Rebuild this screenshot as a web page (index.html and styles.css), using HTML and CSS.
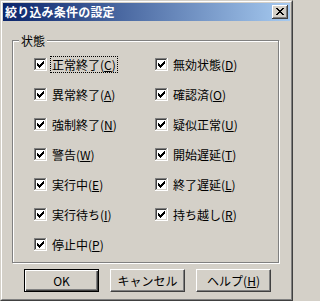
FILE: index.html
```html
<!DOCTYPE html>
<html lang="ja">
<head>
<meta charset="utf-8">
<title>絞り込み条件の設定</title>
<link rel="stylesheet" href="styles.css">
</head>
<body>
<svg class="defs" width="0" height="0" aria-hidden="true">
  <symbol id="cb" viewBox="0 0 13 13">
    <rect x="0" y="0" width="13" height="13" fill="#fff"/>
    <rect x="0" y="0" width="12" height="1" fill="#808080"/>
    <rect x="0" y="0" width="1" height="12" fill="#808080"/>
    <rect x="1" y="1" width="10" height="1" fill="#404040"/>
    <rect x="1" y="1" width="1" height="10" fill="#404040"/>
    <rect x="1" y="11" width="11" height="1" fill="#d4d0c8"/>
    <rect x="11" y="1" width="1" height="11" fill="#d4d0c8"/>
    <path fill="#000" d="M9 3h1v1h-1z M8 4h2v1h-2z M3 5h1v1h-1z M7 5h3v1h-3z M3 6h2v1h-2z M6 6h3v1h-3z M3 7h5v1h-5z M4 8h3v1h-3z M5 9h1v1h-1z"/>
  </symbol>
</svg>
<div class="window">
  <div class="frame">
    <div class="titlebar">
      <span class="title">絞り込み条件の設定</span>
      <svg class="close" width="16" height="14" viewBox="0 0 16 14" shape-rendering="crispEdges">
        <rect x="0" y="0" width="16" height="14" fill="#d4d0c8"/>
        <rect x="0" y="0" width="15" height="1" fill="#fff"/>
        <rect x="0" y="0" width="1" height="13" fill="#fff"/>
        <rect x="0" y="13" width="16" height="1" fill="#404040"/>
        <rect x="15" y="0" width="1" height="14" fill="#404040"/>
        <rect x="1" y="12" width="14" height="1" fill="#808080"/>
        <rect x="14" y="1" width="1" height="12" fill="#808080"/>
        <path fill="#000" d="M4 3h2v1h-2z M10 3h2v1h-2z M5 4h2v1h-2z M9 4h2v1h-2z M6 5h4v1h-4z M7 6h2v1h-2z M6 7h4v1h-4z M5 8h2v1h-2z M9 8h2v1h-2z M4 9h2v1h-2z M10 9h2v1h-2z"/>
      </svg>
    </div>
    <div class="content">
      <div class="group">
        <div class="legend">状態</div>
        <div class="grid">
          <div class="item"><svg class="cb" width="13" height="13" shape-rendering="crispEdges"><use href="#cb"/></svg><span class="label focus">正常終了(<u>C</u>)</span></div>
          <div class="item"><svg class="cb" width="13" height="13" shape-rendering="crispEdges"><use href="#cb"/></svg><span class="label">異常終了(<u>A</u>)</span></div>
          <div class="item"><svg class="cb" width="13" height="13" shape-rendering="crispEdges"><use href="#cb"/></svg><span class="label">強制終了(<u>N</u>)</span></div>
          <div class="item"><svg class="cb" width="13" height="13" shape-rendering="crispEdges"><use href="#cb"/></svg><span class="label">警告(<u>W</u>)</span></div>
          <div class="item"><svg class="cb" width="13" height="13" shape-rendering="crispEdges"><use href="#cb"/></svg><span class="label">実行中(<u>E</u>)</span></div>
          <div class="item"><svg class="cb" width="13" height="13" shape-rendering="crispEdges"><use href="#cb"/></svg><span class="label">実行待ち(<u>I</u>)</span></div>
          <div class="item"><svg class="cb" width="13" height="13" shape-rendering="crispEdges"><use href="#cb"/></svg><span class="label">停止中(<u>P</u>)</span></div>
          <div class="item"><svg class="cb" width="13" height="13" shape-rendering="crispEdges"><use href="#cb"/></svg><span class="label">無効状態(<u>D</u>)</span></div>
          <div class="item"><svg class="cb" width="13" height="13" shape-rendering="crispEdges"><use href="#cb"/></svg><span class="label">確認済(<u>O</u>)</span></div>
          <div class="item"><svg class="cb" width="13" height="13" shape-rendering="crispEdges"><use href="#cb"/></svg><span class="label">疑似正常(<u>U</u>)</span></div>
          <div class="item"><svg class="cb" width="13" height="13" shape-rendering="crispEdges"><use href="#cb"/></svg><span class="label">開始遅延(<u>T</u>)</span></div>
          <div class="item"><svg class="cb" width="13" height="13" shape-rendering="crispEdges"><use href="#cb"/></svg><span class="label">終了遅延(<u>L</u>)</span></div>
          <div class="item"><svg class="cb" width="13" height="13" shape-rendering="crispEdges"><use href="#cb"/></svg><span class="label">持ち越し(<u>R</u>)</span></div>
        </div>
      </div>
      <div class="buttons">
        <div class="btn default">OK</div>
        <div class="btn">キャンセル</div>
        <div class="btn">ヘルプ(<u>H</u>)</div>
      </div>
    </div>
  </div>
</div>
</body>
</html>
```

FILE: styles.css
```css
html, body {
  margin: 0;
  padding: 0;
  background: #d4d0c8;
}

.defs {
  position: absolute;
  width: 0;
  height: 0;
  overflow: hidden;
}

.window {
  width: 293px;
  height: 301px;
  box-sizing: border-box;
  border: 1px solid;
  border-color: #d4d0c8 #404040 #404040 #d4d0c8;
  background: #d4d0c8;
  font-family: "Noto Sans CJK JP", "Noto Sans", sans-serif;
  font-size: 12px;
  color: #000;
}

.frame {
  height: 100%;
  box-sizing: border-box;
  border: 1px solid;
  border-color: #fff #808080 #808080 #fff;
  padding: 1px;
  display: flex;
  flex-direction: column;
}

.titlebar {
  height: 18px;
  flex: none;
  background: linear-gradient(to right, #0a246a, #a6caf0);
  display: flex;
  align-items: center;
  justify-content: space-between;
  padding: 0 2px 0 2px;
}

.title {
  color: #fff;
  font-weight: bold;
  font-size: 12px;
  line-height: 18px;
  letter-spacing: 0.2px;
}

.close {
  display: block;
  flex: none;
}

.content {
  padding: 19px 11px 0 9px;
  display: flex;
  flex-direction: column;
}

.group {
  width: 267px;
  height: 223px;
  box-sizing: border-box;
  border: 1px solid #808080;
  box-shadow: 1px 1px 0 #fff, inset 1px 1px 0 #fff;
  display: flex;
  flex-direction: column;
}

.legend {
  align-self: flex-start;
  margin: -8px 0 0 6px;
  padding: 0 2px;
  height: 15px;
  line-height: 15px;
  background: #d4d0c8;
}

.grid {
  display: grid;
  grid-template-columns: 121px auto;
  grid-template-rows: repeat(7, 17px);
  grid-auto-flow: column;
  row-gap: 13px;
  margin: 8px 0 0 21px;
}

.item {
  display: flex;
  align-items: center;
}

.cb {
  display: block;
  flex: none;
}

.label {
  margin-left: 3px;
  padding: 0 1px;
  border: 1px solid transparent;
  line-height: 15px;
  white-space: nowrap;
}

.label.focus {
  border: 1px dotted #000;
}

u {
  text-decoration: underline;
  text-underline-offset: 1px;
}

.buttons {
  display: flex;
  gap: 11px;
  margin: 6px 0 0 12px;
}

.btn {
  width: 75px;
  height: 23px;
  box-sizing: border-box;
  border: 1px solid;
  border-color: #fff #404040 #404040 #fff;
  box-shadow: inset -1px -1px 0 #808080;
  display: flex;
  align-items: center;
  justify-content: center;
  line-height: 15px;
  white-space: nowrap;
}

.btn.default {
  border-color: #000;
  box-shadow: inset 1px 1px 0 #fff, inset -1px -1px 0 #404040, inset -2px -2px 0 #808080;
}
```
